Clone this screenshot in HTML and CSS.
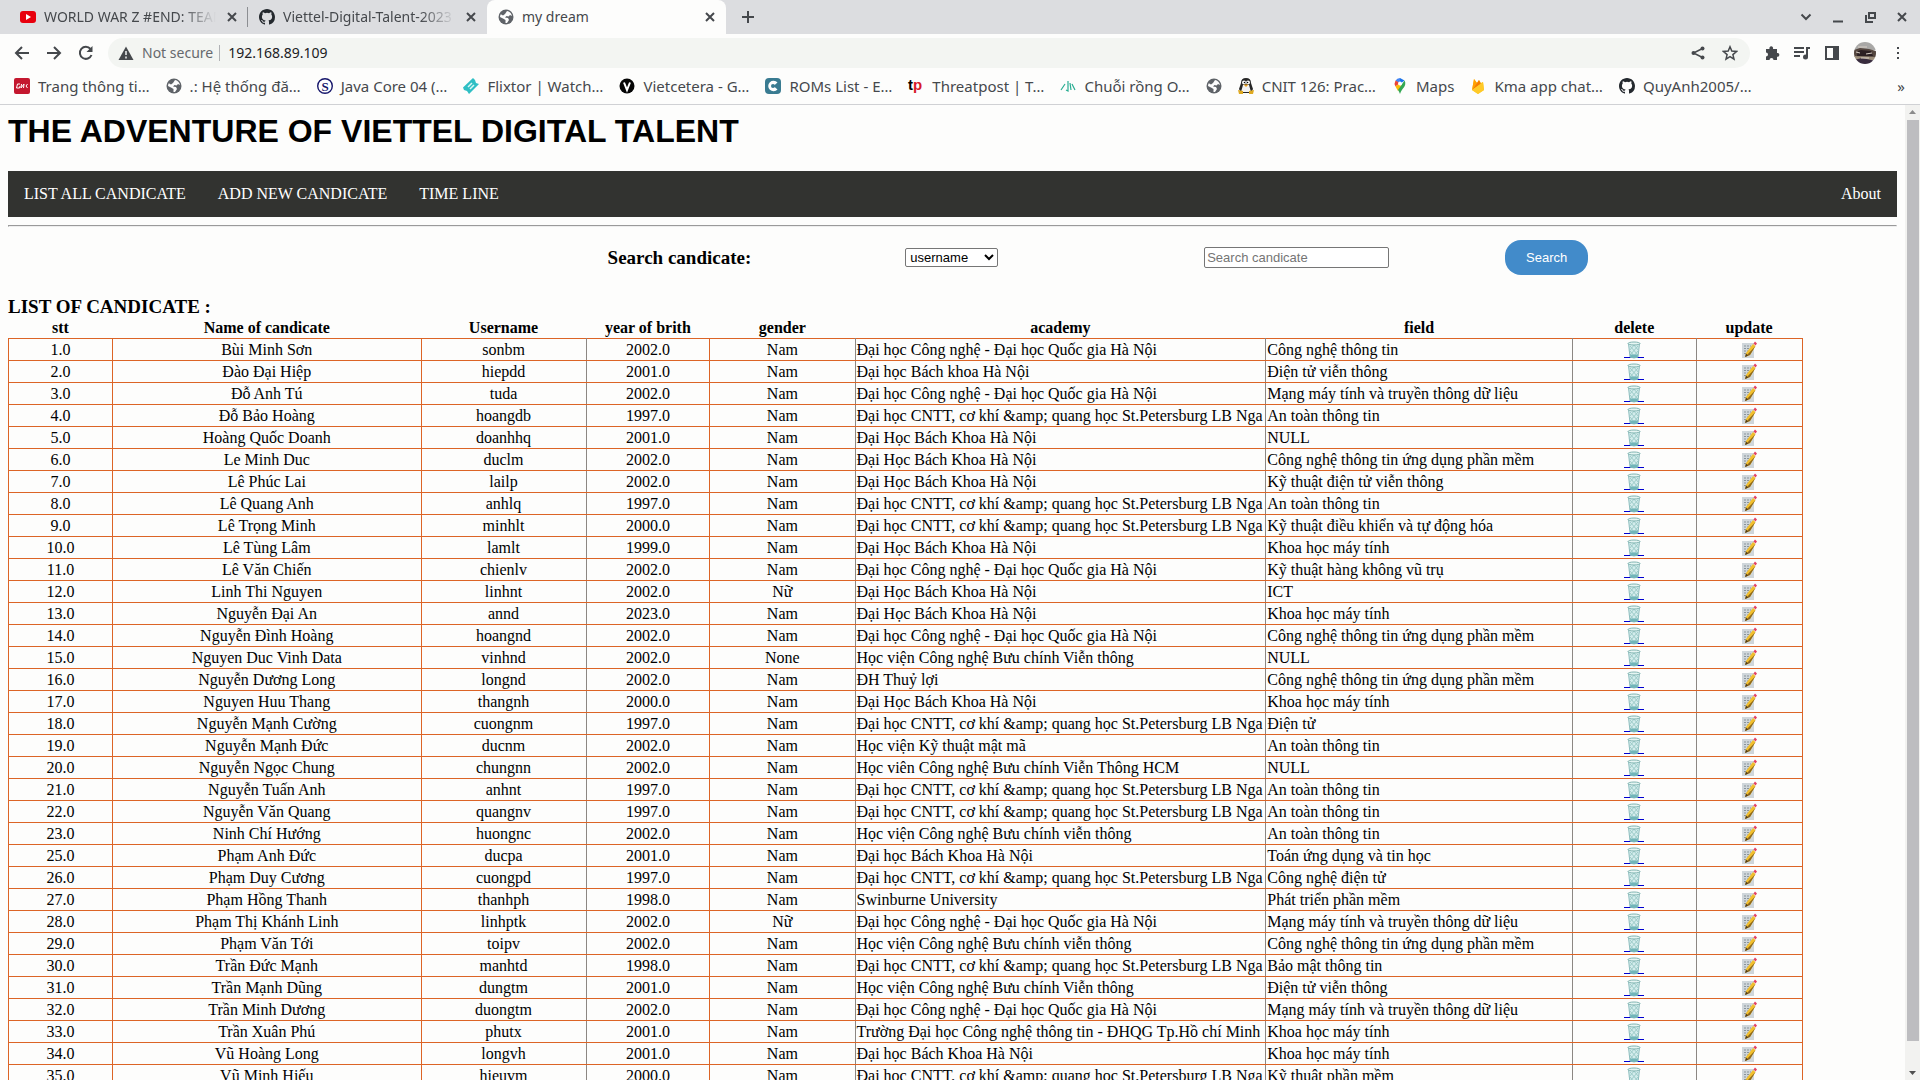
FILE: index.html
```
<!DOCTYPE html>
<html lang="vi">
<head>
<meta charset="utf-8">
<title>my dream</title>
<link rel="stylesheet" href="styles.css">
</head>
<body>
<svg class="defs" aria-hidden="true">
  <symbol id="close" viewBox="0 0 16 16"><path d="M4 4l8 8M12 4l-8 8" stroke="currentColor" stroke-width="2" fill="none"/></symbol>
  <symbol id="github" viewBox="0 0 16 16"><path fill="#24292e" d="M8 0C3.58 0 0 3.58 0 8c0 3.54 2.29 6.53 5.47 7.59.4.07.55-.17.55-.38 0-.19-.01-.82-.01-1.49-2.01.37-2.53-.49-2.69-.94-.09-.23-.48-.94-.82-1.13-.28-.15-.68-.52-.01-.53.63-.01 1.08.58 1.23.82.72 1.21 1.87.87 2.33.66.07-.52.28-.87.51-1.07-1.78-.2-3.64-.89-3.64-3.95 0-.87.31-1.59.82-2.15-.08-.2-.36-1.02.08-2.12 0 0 .67-.21 2.2.82a7.6 7.6 0 0 1 4 0c1.53-1.04 2.2-.82 2.2-.82.44 1.1.16 1.92.08 2.12.51.56.82 1.27.82 2.15 0 3.07-1.87 3.75-3.65 3.95.29.25.54.73.54 1.48 0 1.07-.01 1.93-.01 2.2 0 .21.15.46.55.38A8.01 8.01 0 0 0 16 8c0-4.42-3.58-8-8-8z"/></symbol>
  <symbol id="globe" viewBox="0 0 16 16"><circle cx="8" cy="8" r="7.500" fill="#5f6368"/><path fill="#fdfdfd" d="M9 2c2.600.4 4.600 2.300 5 5l-2-1-1.500 1.500L8.500 7 7 8.500l3 .5 1 2-2 3H7.500v-3L5 9.500 2 8c0-1 .3-2 .8-2.800L5 6.500 7 5z"/></symbol>
  <symbol id="trash" viewBox="0 0 16 18"><path d="M2.500 2.500h11L12 16q-4 2-8 0z" fill="#d3ecec" stroke="#8bbcbd"/><path d="M4 5l8 9M7 3l6 7M4 10l5 6M12 5l-8 9M9 3l-6 7M12 10l-5 6" stroke="#9ccbc8" stroke-width="1" fill="none"/><path d="M4 13.500h8L11.700 16.300q-3.700 1.500-7.400 0z" fill="#71b5b9"/><ellipse cx="8" cy="2.500" rx="6" ry="1.500" fill="#e5f5f3" stroke="#82b5b2"/></symbol>
  <symbol id="memo" viewBox="0 0 16 18"><path d="M1 2h12v15H1z" fill="#cfd6da"/><path d="M3 5h7M3 7.500h7M3 10h6M3 12.500h4" stroke="#89939a" stroke-dasharray="2 1"/><path d="M12 3l2.500 2L9 14l-5 2 1-4z" fill="#f2bf2c"/><path d="M14.500 5L9 14l-5 2 2-2z" fill="#8b671e"/><path d="M5 12.500l2 2L4 16z" fill="#4b3b24"/><path d="M12.500 2.500l1.500-2 2 2-1.500 2z" fill="#e34263"/></symbol>
</svg>

<header class="browser">
  <div class="tabs">
    <div class="tab tab-first">
      <svg class="fav" viewBox="0 0 16 16"><rect y="2" width="16" height="12" rx="3" fill="#e8000d"/><path d="M6 5l5 3-5 3z" fill="#fff"/></svg>
      <span class="tab-title fade">WORLD WAR Z #END: TEAM</span>
      <button class="icon-btn" aria-label="Close tab"><svg class="i16"><use href="#close"/></svg></button>
    </div>
    <div class="tab tab-second">
      <svg class="fav"><use href="#github"/></svg>
      <span class="tab-title fade">Viettel-Digital-Talent-2023</span>
      <button class="icon-btn" aria-label="Close tab"><svg class="i16"><use href="#close"/></svg></button>
    </div>
    <div class="tab tab-active">
      <svg class="fav"><use href="#globe"/></svg>
      <span class="tab-title">my dream</span>
      <button class="icon-btn" aria-label="Close tab"><svg class="i16"><use href="#close"/></svg></button>
    </div>
    <button class="icon-btn new-tab" aria-label="New tab"><svg class="i16" viewBox="0 0 16 16"><path d="M8 2v12M2 8h12" stroke="currentColor" stroke-width="2"/></svg></button>
    <div class="window-buttons">
      <button class="icon-btn" aria-label="Search tabs"><svg class="i16" viewBox="0 0 16 16"><path d="M3.500 5.500L8 10l4.500-4.500" stroke="currentColor" stroke-width="2" fill="none"/></svg></button>
      <button class="icon-btn" aria-label="Minimize"><svg class="i16" viewBox="0 0 16 16"><path d="M3 12.500h10" stroke="currentColor" stroke-width="2"/></svg></button>
      <button class="icon-btn" aria-label="Restore"><svg class="i16" viewBox="0 0 16 16"><path d="M7 4h6v5H7zM4 6v7h7" stroke="currentColor" stroke-width="2" fill="none"/></svg></button>
      <button class="icon-btn" aria-label="Close window"><svg class="i16"><use href="#close"/></svg></button>
    </div>
  </div>

  <div class="toolbar">
    <div class="history">
      <button class="icon-btn" aria-label="Back"><svg class="i16" viewBox="0 0 16 16"><path d="M15 8H2M8 2L2 8l6 6" stroke="currentColor" stroke-width="2" fill="none"/></svg></button>
      <button class="icon-btn" aria-label="Forward"><svg class="i16" viewBox="0 0 16 16"><path d="M1 8h13M8 2l6 6-6 6" stroke="currentColor" stroke-width="2" fill="none"/></svg></button>
      <button class="icon-btn" aria-label="Reload"><svg class="i16" viewBox="0 0 16 16"><path d="M13.500 10A6 6 0 1 1 12.500 4" stroke="currentColor" stroke-width="2" fill="none"/><path d="M14.500 1v6h-6z" fill="currentColor"/></svg></button>
    </div>
    <div class="omnibox">
      <svg class="i16" viewBox="0 0 16 16"><path d="M8 1.500L15.500 15H.5z" fill="currentColor"/><path d="M8 6v4M8 11.500v2" stroke="#f1f3f4" stroke-width="1.500"/></svg>
      <span class="insecure">Not secure</span>
      <input class="address" type="text" aria-label="Address" value="192.168.89.109">
      <button class="icon-btn" aria-label="Share"><svg class="i16" viewBox="0 0 16 16"><path d="M12.500 3.500L3.500 8l9 4.500" stroke="currentColor" stroke-width="1.500" fill="none"/><circle cx="12.500" cy="3.500" r="2" fill="currentColor"/><circle cx="3.500" cy="8" r="2" fill="currentColor"/><circle cx="12.500" cy="12.500" r="2" fill="currentColor"/></svg></button>
      <button class="icon-btn" aria-label="Bookmark"><svg class="i16" viewBox="0 0 16 16"><path d="M8 1.800l1.800 4.300 4.700.4-3.600 3.100 1.100 4.600L8 11.700l-4 2.500 1.100-4.600-3.600-3.100 4.700-.4z" stroke="currentColor" stroke-width="1.500" fill="none"/></svg></button>
    </div>
    <div class="actions">
      <button class="icon-btn" aria-label="Extensions"><svg class="i16" viewBox="0 0 16 16"><path fill="currentColor" d="M2 4h3.500a1.900 1.900 0 1 1 3.500 0H13v4a1.900 1.900 0 1 1 0 3.700V15H9.500a2 2 0 1 0-4 0H2v-3.500a2 2 0 1 0 0-4z"/></svg></button>
      <button class="icon-btn" aria-label="Media"><svg class="i16" viewBox="0 0 16 16"><path d="M0 3h10M0 7h10M0 11h6M13 12V3h3" stroke="currentColor" stroke-width="2" fill="none"/><circle cx="11.500" cy="12" r="2.500" fill="currentColor"/></svg></button>
      <button class="icon-btn" aria-label="Side panel"><svg class="i16" viewBox="0 0 16 16"><path d="M2 2h12v12H2z" stroke="currentColor" stroke-width="2" fill="none"/><path d="M9 2h5v12H9z" fill="currentColor"/></svg></button>
      <button class="icon-btn" aria-label="Profile"><svg class="avatar" viewBox="0 0 22 22"><clipPath id="face"><circle cx="11" cy="11" r="11"/></clipPath><g clip-path="url(#face)"><path fill="#a9a8a6" d="M0 0h22v8H0z"/><path fill="#54463f" d="M0 8l6-2 9 1 7 2v6H0z"/><path fill="#2c2023" d="M4 9l3-1 10 1 2 5H3z"/><path fill="#9d8f7c" d="M0 14l22 1v3H0z"/><path fill="#382c3e" d="M0 18l8-2 14 3v3H0z"/><path stroke="#d9cfc6" d="M2 10l4 1M12 12l6-1M7 16h8M4 5h9"/></g></svg></button>
      <button class="icon-btn" aria-label="Menu"><svg class="i16" viewBox="0 0 16 16"><path d="M7 2h2v2H7zM7 7h2v2H7zM7 12h2v2H7z" fill="currentColor"/></svg></button>
    </div>
  </div>

  <nav class="bookmarks" aria-label="Bookmarks">
    <a href="#"><svg class="fav" viewBox="0 0 16 16"><rect width="16" height="16" rx="2" fill="#c4182f"/><path d="M6 6H3.500L2.500 10h3l.5-2M7.500 6l-.5 4 3-4-.5 4M13.500 6L12 8l1.500 2" stroke="#fff" fill="none"/></svg>Trang thông ti…</a>
    <a href="#"><svg class="fav"><use href="#globe"/></svg>.: Hệ thống đă…</a>
    <a href="#"><svg class="fav" viewBox="0 0 16 16"><circle cx="8" cy="8" r="7.300" fill="#fff" stroke="#16166b" stroke-width="1.400"/><text x="8" y="12.500" class="mark-s">S</text></svg>Java Core 04 (…</a>
    <a href="#"><svg class="fav" viewBox="0 0 16 16"><path d="M0 9.500L10 0l2 2 1 3 3 1-10 10-2-3-3-1z" fill="#2fbfc4"/><path d="M5 9l4-4M7 11l4-4" stroke="#d9f7f6" stroke-width="1.500"/></svg>Flixtor | Watch…</a>
    <a href="#"><svg class="fav" viewBox="0 0 16 16"><circle cx="8" cy="8" r="7.500" fill="#050505"/><path d="M5 4.500L8 12l3-7.500" stroke="#fff" stroke-width="2" fill="none"/></svg>Vietcetera - G…</a>
    <a href="#"><svg class="fav" viewBox="0 0 16 16"><rect width="16" height="16" rx="4" fill="#397b91"/><path d="M12.500 4.500A5.300 5.300 0 1 0 12.500 11.500L8.500 8z" fill="#fff"/><circle cx="8" cy="8" r="2" fill="#397b91"/></svg>ROMs List - E…</a>
    <a href="#"><svg class="fav" viewBox="0 0 16 16"><text x="0" y="12" class="mark-tp">t<tspan fill="#d71a2b">p</tspan></text></svg>Threatpost | T…</a>
    <a href="#"><svg class="fav" viewBox="0 0 16 16"><path d="M1 12l4-6M8 3v10l-2-1M10 5l1 7M12 6l3 6" stroke="#29ad92" stroke-width="1.200" fill="none"/></svg>Chuỗi rồng O…</a>
    <a href="#" aria-label="Bookmark"><svg class="fav"><use href="#globe"/></svg></a>
    <a href="#"><svg class="fav" viewBox="0 0 16 16"><path d="M3 5q0-5 5-5t5 5l2 6-2 4H3l-2-4z" fill="#272727"/><path d="M5 7h6l2 7H3z" fill="#f3f3f3"/><circle cx="6" cy="4.500" r="2" fill="#fff"/><circle cx="10" cy="4.500" r="2" fill="#fff"/><circle cx="6.500" cy="4.500" r=".8"/><circle cx="9.500" cy="4.500" r=".8"/><path d="M5.500 6.500h5L8 9z" fill="#e79f20"/><path d="M0 12l5 1v3H1zM16 12l-5 1v3h4z" fill="#dfaa21"/></svg>CNIT 126: Prac…</a>
    <a href="#"><svg class="fav" viewBox="0 0 16 16"><path d="M8 0a5.300 5.300 0 0 0-4.500 2.500L8 6z" fill="#4285f4"/><path d="M8 0l4.500 2.500L8 6z" fill="#1a73e8"/><path d="M3.500 2.500A6 6 0 0 0 3.500 8.500L8 5z" fill="#ea4335"/><path d="M3.500 8.500L8 5l1 4-3 4z" fill="#fbbc04"/><path d="M12.500 2.500c1.500 2.500.8 5-.7 7C10 11.700 9 13 8 16c-.5-1.500-1-2.500-2-4z" fill="#34a853"/><circle cx="8" cy="5.500" r="2" fill="#fff"/></svg>Maps</a>
    <a href="#"><svg class="fav" viewBox="0 0 16 16"><path d="M2 12L4 1l3 4 2-3 2 3 2-1 1 8-6 4z" fill="#ffca28"/><path d="M2 12L4 1l3 4z" fill="#ffa000"/><path d="M2 12l7-10 2 4z" fill="#f57c00"/><path d="M2 12l11-8 1 8-6 4z" fill="#ffca28"/></svg>Kma app chat…</a>
    <a href="#"><svg class="fav"><use href="#github"/></svg>QuyAnh2005/…</a>
    <button class="icon-btn more" aria-label="More bookmarks">»</button>
  </nav>
</header>

<div class="viewport">
  <main class="page">
    <h1>THE ADVENTURE OF VIETTEL DIGITAL TALENT</h1>
    <nav class="menu" aria-label="Main">
      <a href="#">LIST ALL CANDICATE</a>
      <a href="#">ADD NEW CANDICATE</a>
      <a href="#">TIME LINE</a>
      <a href="#" class="about">About</a>
    </nav>
    <hr>
    <form class="search">
      <label class="heading" for="keyword">Search candicate:</label>
      <select aria-label="Search by"><option>username</option></select>
      <input id="keyword" type="text" placeholder="Search candicate">
      <button class="submit" type="button">Search</button>
    </form>
    <h3 class="heading">LIST OF CANDICATE :</h3>
    <table>
      <colgroup><col class="c-stt"><col class="c-name"><col class="c-user"><col class="c-year"><col class="c-gender"><col class="c-academy"><col class="c-field"><col class="c-delete"><col class="c-update"></colgroup>
      <thead><tr><th>stt</th><th>Name of candicate</th><th>Username</th><th>year of brith</th><th>gender</th><th>academy</th><th>field</th><th>delete</th><th>update</th></tr></thead>
      <tbody id="rows"></tbody>
    </table>
  </main>
  <div class="scrollbar" aria-hidden="true">
    <svg class="arrow" viewBox="0 0 15 15"><path d="M4 9h7L7.500 5z" fill="#8b8b8b"/></svg>
    <div class="thumb"></div>
    <svg class="arrow" viewBox="0 0 15 15"><path d="M4 6h7l-3.500 4z" fill="#505050"/></svg>
  </div>
</div>
<script src="script.js"></script>
</body>
</html>
```
FILE: styles.css
```
* { box-sizing: border-box; }
body {
  margin: 0;
  height: 100vh;
  display: flex;
  flex-direction: column;
  overflow: hidden;
  background: #fdfdfc;
  color: #000;
  font: 16px/18px "Liberation Serif", serif;
}
.defs { position: absolute; width: 0; height: 0; }
svg { display: block; flex: none; }
.i16, .fav { width: 16px; height: 16px; }
.fav { overflow: visible; }
.avatar { width: 22px; height: 22px; }
.icon-btn {
  display: flex;
  padding: 0;
  border: 0;
  background: none;
  color: inherit;
  font: inherit;
}

/* browser frame */
.browser {
  flex: none;
  border-bottom: 1px solid #d0d1d4;
  color: #45484c;
  font: 14px/20px "Noto Sans", sans-serif;
}
.tabs { display: flex; align-items: center; height: 34px; background: #dcdde0; }
.tab { display: flex; align-items: center; gap: 8px; height: 34px; }
.tab-first { width: 248px; padding: 0 8px 0 20px; }
.tab-second { width: 239px; padding: 0 8px 0 11px; }
.tab-second::before { content: ""; width: 1px; height: 20px; margin-left: -12px; margin-right: 3px; background: #8c8e92; }
.tab-active { width: 239px; padding: 0 8px 0 11px; border-radius: 8px 8px 0 0; background: #fdfdfc; }
.tab-title { flex: 1; overflow: hidden; white-space: nowrap; }
.fade { -webkit-mask-image: linear-gradient(to right, #000 80%, transparent); mask-image: linear-gradient(to right, #000 80%, transparent); }
.new-tab { margin-left: 14px; }
.window-buttons { display: flex; gap: 16px; margin-left: auto; padding-right: 10px; }

.toolbar { display: flex; align-items: center; gap: 14px; height: 36px; padding: 0 14px; margin-top: 1px; }
.history { display: flex; gap: 16px; }
.omnibox {
  flex: 1;
  display: flex;
  align-items: center;
  height: 30px;
  padding: 0 12px 0 10px;
  border-radius: 15px;
  background: #f3f5f2;
}
.insecure { margin-left: 8px; padding-right: 6px; border-right: 1px solid #b0b2b5; line-height: 16px; color: #66696d; }
.address { flex: 1; margin: 0; padding: 0 8px; border: 0; background: none; color: #202124; font: inherit; }
.omnibox .icon-btn { margin-left: 16px; }
.actions { display: flex; align-items: center; gap: 14px; }

.bookmarks { display: flex; align-items: center; gap: 16px; height: 30px; margin-bottom: 3px; padding: 0 15px 0 14px; font-size: 15px; }
.bookmarks a { display: flex; align-items: center; gap: 8px; color: inherit; text-decoration: none; white-space: nowrap; }
.more { margin-left: auto; }
.mark-s { font: bold 13px "Liberation Serif", serif; text-anchor: middle; fill: #16166b; }
.mark-tp { font: bold 15px "Liberation Sans", sans-serif; }

/* page */
.viewport { flex: 1; display: flex; min-height: 0; }
.page { flex: 1; min-width: 0; padding: 8px; overflow: hidden; }
h1 { margin: 0 0 21px; font: bold 32px/37px "Liberation Sans", sans-serif; }
.menu { display: flex; background: #323330; }
.menu a { padding: 14px 16px; color: #fff; text-decoration: none; }
.menu .about { margin-left: auto; }
hr { margin: 8px 0; }
.heading { margin: 0; font-size: 19px; line-height: 22px; font-weight: bold; }
.search {
  display: grid;
  grid-template-columns: 236fr 309fr 381fr 119fr;
  align-items: center;
  justify-items: center;
  margin: 13px 15.4% 21px 29.3%;
}
.search select, .search input, .submit { font: 13px "Liberation Sans", sans-serif; }
.search select { width: 93px; height: 19px; border: 1px solid #767676; border-radius: 2px; background: #fff; }
.search input { width: 185px; height: 21px; padding: 1px 2px; border: 1px solid #767676; border-radius: 2px; background: #fff; }
.submit { height: 35px; padding: 0 21px; border: 0; border-radius: 16px; background: #428bca; color: #fff; }

table { width: 95%; table-layout: fixed; border-collapse: collapse; }
.c-stt { width: 5.8%; }
.c-name { width: 17.2%; }
.c-user { width: 9.2%; }
.c-year { width: 6.9%; }
.c-gender { width: 8.1%; }
.c-academy { width: 22.9%; }
.c-field { width: 17.1%; }
.c-delete { width: 6.9%; }
.c-update { width: 5.9%; }
th { height: 20px; padding: 1px; }
td { height: 22px; padding: 1px; border: 1px solid #dc6426; text-align: center; white-space: nowrap; }
td:nth-child(4), td:nth-child(n+6) { border-left-color: #8c8783; }
td:nth-child(3), td:nth-child(n+5):nth-child(-n+8) { border-right-color: #8c8783; }
td:nth-child(6), td:nth-child(7) { text-align: left; }
td a { display: inline-block; vertical-align: top; }
td a svg { width: 16px; height: 18px; }
.remove { padding: 0 2px; background: linear-gradient(#0000d0, #0000d0) 0 16px / 100% 1px no-repeat; }

.scrollbar { display: flex; flex-direction: column; width: 15px; background: #f2f2f0; }
.arrow { width: 15px; height: 15px; }
.thumb { flex: 1; margin: 0 1px 24px 2px; background: #bdbdc0; }
```
FILE: script.js
```
const VNU = "Đại học Công nghệ - Đại học Quốc gia Hà Nội";
const BK = "Đại Học Bách Khoa Hà Nội";
const BK2 = "Đại học Bách Khoa Hà Nội";
const ITMO = "Đại học CNTT, cơ khí &amp; quang học St.Petersburg LB Nga";
const PTIT = "Học viện Công nghệ Bưu chính Viễn thông";
const PTIT2 = "Học viện Công nghệ Bưu chính viễn thông";
const SAFE = "An toàn thông tin";
const CS = "Khoa học máy tính";
const NET = "Mạng máy tính và truyền thông dữ liệu";
const SOFT = "Công nghệ thông tin ứng dụng phần mềm";

const candidates = [
  [1, "Bùi Minh Sơn", "sonbm", 2002, "Nam", VNU, "Công nghệ thông tin"],
  [2, "Đào Đại Hiệp", "hiepdd", 2001, "Nam", "Đại học Bách khoa Hà Nội", "Điện tử viễn thông"],
  [3, "Đỗ Anh Tú", "tuda", 2002, "Nam", VNU, NET],
  [4, "Đỗ Bảo Hoàng", "hoangdb", 1997, "Nam", ITMO, SAFE],
  [5, "Hoàng Quốc Doanh", "doanhhq", 2001, "Nam", BK, "NULL"],
  [6, "Le Minh Duc", "duclm", 2002, "Nam", BK, SOFT],
  [7, "Lê Phúc Lai", "lailp", 2002, "Nam", BK, "Kỹ thuật điện tử viễn thông"],
  [8, "Lê Quang Anh", "anhlq", 1997, "Nam", ITMO, SAFE],
  [9, "Lê Trọng Minh", "minhlt", 2000, "Nam", ITMO, "Kỹ thuật điều khiển và tự động hóa"],
  [10, "Lê Tùng Lâm", "lamlt", 1999, "Nam", BK, CS],
  [11, "Lê Văn Chiến", "chienlv", 2002, "Nam", VNU, "Kỹ thuật hàng không vũ trụ"],
  [12, "Linh Thi Nguyen", "linhnt", 2002, "Nữ", BK, "ICT"],
  [13, "Nguyễn Đại An", "annd", 2023, "Nam", BK, CS],
  [14, "Nguyễn Đình Hoàng", "hoangnd", 2002, "Nam", VNU, SOFT],
  [15, "Nguyen Duc Vinh Data", "vinhnd", 2002, "None", PTIT, "NULL"],
  [16, "Nguyễn Dương Long", "longnd", 2002, "Nam", "ĐH Thuỷ lợi", SOFT],
  [17, "Nguyen Huu Thang", "thangnh", 2000, "Nam", BK, CS],
  [18, "Nguyễn Mạnh Cường", "cuongnm", 1997, "Nam", ITMO, "Điện tử"],
  [19, "Nguyễn Mạnh Đức", "ducnm", 2002, "Nam", "Học viện Kỹ thuật mật mã", SAFE],
  [20, "Nguyễn Ngọc Chung", "chungnn", 2002, "Nam", "Học viên Công nghệ Bưu chính Viễn Thông HCM", "NULL"],
  [21, "Nguyễn Tuấn Anh", "anhnt", 1997, "Nam", ITMO, SAFE],
  [22, "Nguyễn Văn Quang", "quangnv", 1997, "Nam", ITMO, SAFE],
  [23, "Ninh Chí Hướng", "huongnc", 2002, "Nam", PTIT2, SAFE],
  [25, "Phạm Anh Đức", "ducpa", 2001, "Nam", BK2, "Toán ứng dụng và tin học"],
  [26, "Phạm Duy Cương", "cuongpd", 1997, "Nam", ITMO, "Công nghệ điện tử"],
  [27, "Phạm Hồng Thanh", "thanhph", 1998, "Nam", "Swinburne University", "Phát triển phần mềm"],
  [28, "Phạm Thị Khánh Linh", "linhptk", 2002, "Nữ", VNU, NET],
  [29, "Phạm Văn Tới", "toipv", 2002, "Nam", PTIT2, SOFT],
  [30, "Trần Đức Mạnh", "manhtd", 1998, "Nam", ITMO, "Bảo mật thông tin"],
  [31, "Trần Mạnh Dũng", "dungtm", 2001, "Nam", PTIT, "Điện tử viễn thông"],
  [32, "Trần Minh Dương", "duongtm", 2002, "Nam", VNU, NET],
  [33, "Trần Xuân Phú", "phutx", 2001, "Nam", "Trường Đại học Công nghệ thông tin - ĐHQG Tp.Hồ chí Minh", CS],
  [34, "Vũ Hoàng Long", "longvh", 2001, "Nam", BK2, CS],
  [35, "Vũ Minh Hiếu", "hieuvm", 2000, "Nam", ITMO, "Kỹ thuật phần mềm"]
];

const body = document.getElementById("rows");
for (const c of candidates) {
  const tr = body.insertRow();
  c.forEach((value, i) => {
    tr.insertCell().textContent = i === 0 || i === 3 ? value.toFixed(1) : value;
  });
  tr.insertCell().innerHTML = '<a class="remove" href="#" aria-label="delete"><svg><use href="#trash"/></svg></a>';
  tr.insertCell().innerHTML = '<a href="#" aria-label="update"><svg><use href="#memo"/></svg></a>';
}
```
